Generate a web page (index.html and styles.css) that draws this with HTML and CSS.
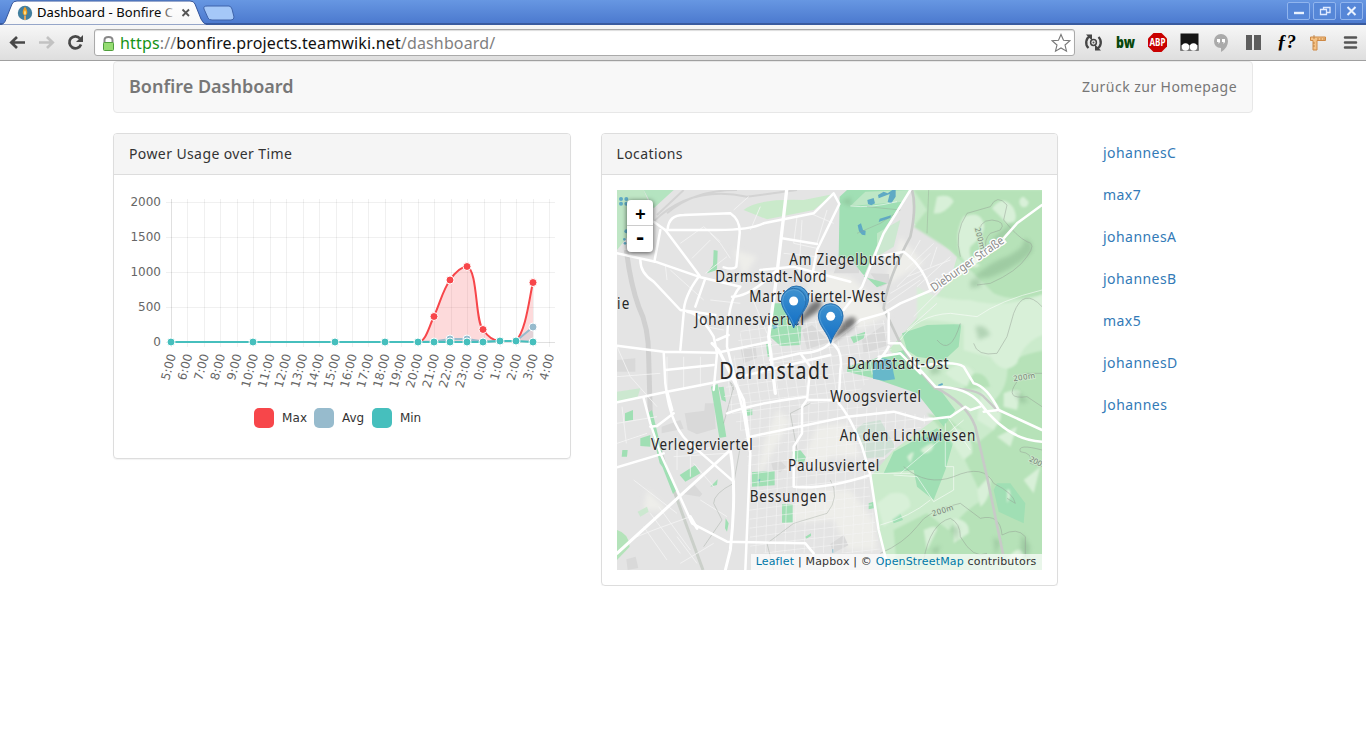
FILE: index.html
```html
<!DOCTYPE html>
<html lang="de">
<head>
<meta charset="utf-8">
<title>Dashboard - Bonfire</title>
<link rel="stylesheet" href="styles.css">
</head>
<body>
<header class="browser">
  <div class="tabstrip">
    <svg class="tabs" width="260" height="25" viewBox="0 0 260 25">
      <defs>
        <linearGradient id="tabg" x1="0" y1="0" x2="0" y2="1"><stop offset="0" stop-color="#fff"/><stop offset="1" stop-color="#f7f7f7"/></linearGradient>
        <linearGradient id="fade"><stop offset="0" stop-color="#000"/><stop offset=".91" stop-color="#111"/><stop offset="1" stop-color="#ccc"/></linearGradient>
      </defs>
      <path d="M0 25C4 24 5 22 6 19L12 4Q13 1 17 1H190Q194 1 195 4L201 19Q203 24 208 25Z" fill="url(#tabg)" stroke="#34559b"/>
      <path d="M207 6H229Q231 6 232 9L234 17Q234 20 231 20H212Q209 20 208 18L204 9Q203 6 207 6Z" fill="#a5c8f8" stroke="#3e63aa"/>
      <circle cx="25" cy="13" r="7.2" fill="#427f9f"/>
      <path d="M25 6.5Q21.800 11.500 23 14Q25 16.500 27 14Q28.200 11.500 25 6.500Z" fill="#ef9d20"/>
      <path d="M25 10Q23.500 12.500 24.300 14.500H25.700Q26.500 12.500 25 10Z" fill="#fff2a5"/>
      <path d="M24 15.500H26V20H24Z" fill="#d8a360"/>
      <text x="37" y="17" class="tab-title" textLength="136" fill="url(#fade)">Dashboard - Bonfire C</text>
      <path d="M182.500 9.500L189 16M189 9.500L182.500 16" stroke="#555" stroke-width="1.800"/>
    </svg>
    <svg class="winbtns" width="82" height="25" viewBox="1284 0 82 25">
      <g fill="#5687d8" stroke="#91b5ee">
        <rect x="1287.500" y="2.500" width="22" height="17" rx="1.500"/><rect x="1313.500" y="2.500" width="22" height="17" rx="1.500"/><rect x="1340.500" y="2.500" width="22" height="17" rx="1.500"/>
      </g>
      <path d="M1294 13H1304" stroke="#e9f2ff" stroke-width="2.400"/>
      <path d="M1320.500 9.500H1326.500V14.500H1320.500ZM1323.500 9.500V7.500H1330V12.500H1326.500" fill="none" stroke="#dfeaff" stroke-width="1.300"/>
      <path d="M1347.500 7L1355.500 15M1355.500 7L1347.500 15" stroke="#e9f2ff" stroke-width="2"/>
    </svg>
  </div>
  <div class="toolbar">
    <svg class="nav-icons" width="94" height="35" viewBox="0 25 94 35">
      <g fill="none" stroke-width="2.700">
        <path d="M25 42.500H11M17 37L11.300 42.500L17 48" stroke="#484848"/>
        <path d="M39 42.500H53M47 37L52.700 42.500L47 48" stroke="#c2c2c2"/>
        <path d="M80 38.500A6 6 0 1 0 81 44.500" stroke="#484848"/>
      </g>
      <path d="M83 35V42H76Z" fill="#484848"/>
    </svg>
    <div class="omnibox">
      <svg width="14" height="18" viewBox="100 33 14 18">
        <path d="M103.500 42V39Q103.500 36 107.500 36T111.500 39V42" fill="none" stroke="#888" stroke-width="2"/>
        <rect x="102.500" y="41.500" width="10" height="8" rx="1" fill="#95dc72" stroke="#4f9e3c"/>
      </svg>
      <span class="url"><b>https</b><i>://</i>bonfire.projects.teamwiki.net<i>/dashboard/</i></span>
      <svg class="star" width="20" height="20" viewBox="0 0 20 20"><path d="M10 1.500L12.500 7.300L18.700 7.800L14 12L15.500 18.200L10 15L4.500 18.200L6 12L1.300 7.800L7.500 7.300Z" fill="#fff" stroke="#777" stroke-width="1.100"/></svg>
    </div>
    <svg class="ext" width="290" height="35" viewBox="1076 25 290 35">
      <g fill="none" stroke="#454545" stroke-width="2.300"><path d="M1090.500 35.800A7.500 7.500 0 0 0 1088.500 48M1096.500 49.200A7.500 7.500 0 0 0 1098.500 37"/><circle cx="1093.500" cy="42.500" r="2.900" stroke-width="1.500"/></g>
      <path d="M1086 34.500H1092V40.500ZM1101 50.500H1095V44.500Z" fill="#454545"/><circle cx="1093.500" cy="42.500" r="1" fill="#555"/>
      <text x="1116" y="48" class="bw" textLength="19" lengthAdjust="spacingAndGlyphs">bw</text>
      <path d="M1153.500 33H1161.500L1167 38.500V46.500L1161.500 52H1153.500L1148 46.500V38.500Z" fill="#c90000"/>
      <text x="1149.500" y="46.300" class="abp" textLength="16" lengthAdjust="spacingAndGlyphs">ABP</text>
      <rect x="1180.500" y="33.500" width="18" height="17" fill="#151515"/><path d="M1180.500 45H1198.500V51H1180.500Z" fill="#777"/>
      <circle cx="1185.500" cy="47" r="3.700" fill="#fff"/><circle cx="1193.500" cy="47" r="3.700" fill="#fff"/>
      <path d="M1221 34A7 7 0 0 0 1214 41Q1214 47.500 1221 48V52Q1228 48 1228 41A7 7 0 0 0 1221 34Z" fill="#aaa"/>
      <path d="M1217 39H1220V42L1218.500 44V42H1217ZM1222 39H1225V42L1223.500 44V42H1222Z" fill="#fff"/>
      <path d="M1246 35H1252V50H1246ZM1254 35H1261V50H1254Z" fill="#5d5d5d"/>
      <text x="1277" y="48" class="ff" textLength="19" lengthAdjust="spacingAndGlyphs">ƒ?</text>
      <path d="M1310.500 37H1325.500V40.500H1317V50H1313V40.500H1310.500Z" fill="#f5c285" stroke="#cd8845"/>
      <path d="M1314 35V39M1318 38V40M1321 38V40M1324 38V40M1313 43H1315M1313 46H1315" stroke="#b87938" stroke-width=".8"/>
      <path d="M1345 37.500H1356M1345 42.500H1356M1345 47.500H1356" stroke="#555" stroke-width="2.500" stroke-linecap="round"/>
    </svg>
  </div>
</header>
<div class="container">
  <nav class="navbar"><a class="brand">Bonfire Dashboard</a><a class="home">Zurück zur Homepage</a></nav>
  <main class="row">
    <section class="panel chart-panel">
      <h3 class="panel-heading">Power Usage over Time</h3>
      <div class="panel-body"><svg id="chart" width="427" height="253" viewBox="129 190 427 253"></svg></div>
    </section>
    <section class="panel map-panel">
      <h3 class="panel-heading">Locations</h3>
      <div class="panel-body">
        <div class="map">
          <svg class="tiles" width="425" height="380" viewBox="0 0 1275 1140">
            <defs>
              <filter id="b6"><feGaussianBlur stdDeviation="8"/></filter>
              <filter id="b3" x="-50%" y="-50%" width="200%" height="200%"><feGaussianBlur stdDeviation="6"/></filter>
              <filter id="b1"><feGaussianBlur stdDeviation="2.500"/></filter>
              <linearGradient id="pin" x1="0" y1="0" x2="0" y2="1"><stop offset="0" stop-color="#3f92cf"/><stop offset="1" stop-color="#126fc6"/></linearGradient>
              <clipPath id="cityclip"><path d="M380 390H800L830 470L700 640L950 680L830 780L750 860L790 1090H400L390 760L320 620Z"/></clipPath>
              <g id="marker">
                <path d="M0 0C-8 -32 -37 -53 -37 -82A37 37 0 0 1 37 -82C37 -53 8 -32 0 0Z" fill="url(#pin)" stroke="#2a6fac" stroke-width="3"/>
                <path d="M0 -10C-8 -37 -33 -56 -33 -82A33 33 0 0 1 33 -82" fill="none" stroke="#68aadb" stroke-width="3" opacity=".6"/>
                <circle cy="-81" r="13.500" fill="#fff"/>
              </g>
              <path id="pinshade" d="M0 0Q16 -36 40 -66Q66 -88 76 -72Q78 -52 44 -32Q20 -18 0 0Z" fill="#000" opacity=".48" filter="url(#b3)"/>
            </defs>
            <rect width="1275" height="1140" fill="#e4e4e4"/>
            <!-- terrain -->
            <g filter="url(#b6)" fill="#eeeeea">
              <path d="M590 240L700 260L820 370L730 420L640 330L560 330ZM690 700L600 710L560 800L590 850L640 800L730 800L720 770ZM480 660L520 690L460 800L420 870L440 760ZM560 900L700 900L770 990L780 1080H690L650 990L500 1000ZM350 180L420 200L380 260ZM90 900L150 960L80 960ZM850 140L920 220L800 290Z"/>
            </g>
            <g fill="#d9d9d9">
              <path d="M203 670L262 662L264 640L292 640L296 716L240 733L212 720ZM134 710L190 690L200 716L134 730ZM555 420L585 405L640 455L570 478ZM370 474L415 462L420 504L380 520ZM198 912L232 884L256 912L248 920ZM28 1108L56 1100L64 1134L32 1140ZM640 1062L680 1035L694 1066L648 1090ZM770 820L828 794L832 822L788 842ZM760 250L816 252L818 278L790 292ZM35 10L70 45L30 45ZM676 183L726 172V250H650ZM735 450L800 405L815 465L740 490ZM463 820L490 812L508 830L490 847L468 840ZM0 510L55 505V545H0Z"/>
            </g>
            <g fill="none" stroke="#d0d0d0">
              <path d="M28 180Q40 280 65 350Q95 410 95 500L100 680" stroke-width="15"/>
              <path d="M100 680L152 850L210 1010L258 1140" stroke-width="9" stroke="#cbd0ca"/>
              <path d="M110 95Q220 -15 390 20L540 0M120 75L200 0M150 70Q230 0 360 0" stroke-width="6" stroke="#d3d3d3"/>
            </g>
            <path d="M110 0H170L110 55L80 0Z" fill="#b4e4c0"/><path d="M0 0H80L105 60L40 130L0 180Z" fill="#bfe6c5"/>
            <!-- woodland -->
            <path d="M885 0H1275V1140H812L783 1030L760 860L830 780L950 690L1000 680L970 600L880 530L815 480L850 440L1000 270L1020 200L930 120L890 100Z" fill="#cbebcc"/>
            <path d="M380 60Q420 25 560 30L650 12L590 60L450 88Z" fill="#caeacb"/>
            <g fill="#b6e2b8" filter="url(#b1)">
              <path d="M1010 0H1290V310Q1190 340 1130 310L1060 240L1000 180L890 110L930 60L890 0ZM1170 520Q1220 490 1290 480V1150H930L980 1040Q1050 950 1100 930L1030 780L930 670L1000 690L1080 760L1130 720L1110 650Q1180 600 1170 520ZM830 1020L930 970L1020 1040L940 1140H840ZM1050 560Q1100 530 1120 590L1040 600Z"/>
            </g>
            <g fill="#a0dfb4">
              <path d="M668 20L690 0H880L800 120L740 260L810 280L780 292L735 250L700 205H665Z"/>
              <path d="M855 430L930 405L1033 402L1025 470L980 512L900 500L870 480ZM690 530L760 510L860 480L920 560L970 600L1015 660L980 710L900 610L770 565L690 545ZM830 785L960 715L1008 760L985 840L950 930L900 890L890 840L800 850ZM1140 880L1180 880L1225 940L1220 1000L1145 965L1130 900Z"/>
              <path d="M463 340H500L525 400L553 410L550 465L490 468L460 440ZM405 846L473 843V886L405 890ZM495 943H527V998H495ZM188 855L235 825L250 850L205 875ZM525 785L550 780L567 802L560 820L530 812ZM282 590L302 582L328 740L307 744ZM305 592L320 590L327 635L314 630ZM92 670L105 660L150 850L128 820ZM70 745L100 735V770L70 768ZM120 790L130 780L178 900L168 912ZM16 780H32L30 800H14ZM24 670L48 660V690L24 694ZM290 180L302 182L300 240L270 250L288 225ZM700 440L745 425L740 445L710 460ZM820 975L850 970L858 990L830 1000ZM326 985L335 1000L330 1025L324 1015ZM280 890L302 868L300 885ZM447 462L465 462L464 500L452 500ZM387 660L406 658V675L388 678ZM565 1040L582 1030V1038L568 1046ZM755 940L770 935V955L755 958Z"/>
            </g>
            <g fill="#c5e8cb"><path d="M0 605L70 595L60 628L0 635ZM62 965L90 950L95 965L70 980ZM745 5L880 0L860 35L700 48ZM780 130L850 90L830 170L780 200Z" opacity=".8"/></g>
            <path d="M740 700L790 690L835 770L800 800L750 805L715 720Z" fill="#cfe0d5"/>
            <path d="M0 1020Q35 1030 38 1070L0 1110Z" fill="#b4e3ba"/>
            <g fill="#d8f0d8" filter="url(#b1)">
              <path d="M1040 80Q1090 60 1100 100Q1110 130 1060 170Q1050 210 1090 225Q1060 250 1030 195Q1010 130 1040 80ZM960 20Q1000 10 1010 35Q980 75 950 70ZM900 290Q950 330 1060 330Q1160 360 1290 310V430Q1220 450 1200 520Q1160 560 1120 500Q1070 490 1040 480V405Q980 390 900 390ZM985 550Q1030 500 1070 545L1050 590L1010 570ZM1095 600L1120 630Q1160 650 1150 690L1130 720L1080 690ZM1010 710Q1070 730 1065 790L1040 810L1000 750ZM1010 985Q1060 990 1055 1030L1010 1060ZM920 1020Q960 1000 960 1020L930 1080ZM1080 900Q1120 850 1120 870Q1120 930 1090 950ZM1175 1100Q1210 1060 1220 1095L1190 1130ZM1160 610Q1210 590 1210 610L1200 660L1160 650ZM1125 55Q1160 10 1190 55Q1210 100 1170 100ZM1220 870L1270 830L1250 910ZM1200 710L1180 770L1140 740Z"/>
              <path d="M1220 20A14 16 0 1 0 1235 35ZM910 780Q950 750 950 765Q945 790 920 790ZM870 800Q890 780 890 790L880 820ZM780 940L820 910Q880 900 880 950L800 1010ZM1170 900Q1180 890 1180 920L1170 940Z"/>
            </g>
            <g filter="url(#b3)" fill="#80ad86" opacity=".42">
              <path d="M1070 260Q1130 210 1170 200Q1230 170 1220 145Q1250 150 1245 185Q1190 240 1110 265ZM1060 270L1090 265V290L1060 295ZM1120 150L1185 100Q1200 110 1150 150ZM940 530L965 520L970 550L940 555ZM1075 410Q1105 400 1120 435L1085 450ZM1190 600L1210 610L1235 635L1210 640ZM1000 1010L1025 1010L1020 1055ZM940 1080L970 1065L960 1095ZM670 35L700 20L705 50ZM1130 1040L1150 1055L1135 1100ZM1215 1030L1240 1070L1230 1110L1210 1080Z"/>
            </g>
            <!-- water -->
            <g fill="#5faac4">
              <path d="M751 30L770 24L774 40L763 46L753 42ZM783 15L800 5L812 10L826 0H836V20L823 40L812 36L818 12L785 25ZM788 86L822 76L820 84L785 96ZM722 106L732 100L738 120L746 122L745 136L735 134L726 124ZM962 585L976 579L978 584L966 590ZM466 407L480 400L482 412L470 418Z"/>
              <path d="M766 518L790 505L822 508L830 550L834 568L800 572L768 566Z" fill="#67b8ca"/>
              <path d="M924 745L970 730L973 750L935 754ZM421 870L430 866L428 880ZM645 1078H650V1088H645Z" opacity=".65"/>
              <circle cx="12" cy="27" r="6"/><circle cx="28" cy="27" r="6"/><circle cx="12" cy="41" r="6"/><circle cx="28" cy="41" r="6"/><circle cx="28" cy="124" r="6"/><circle cx="22" cy="148" r="4"/><circle cx="24" cy="160" r="4"/>
            </g>
            <!-- minor streets -->
            <g fill="none" stroke="#f4f4f4" stroke-width="2.500">
              <g clip-path="url(#cityclip)"><path id="grid" opacity=".7"/></g>
              <path d="M0 470L40 560L120 650M0 560L130 550M0 700L120 680M15 650L28 760M280 130L310 160L340 205M190 160L260 110L310 155M225 205L280 150M265 250L330 200M430 50L400 120M540 80L530 160L600 175M580 70L650 100M555 90L545 260M630 60L600 160M500 190L600 200M145 225L150 270M160 240L260 330M280 330L370 340M400 310L450 430M265 410L320 420M0 760L90 730M50 870L180 970M80 1010L150 1110M100 970L190 1090M125 950L220 1080M60 1040L110 1020L220 980M180 1040L240 1120M190 1120L290 1060M230 820L290 890M230 790L310 760M250 930L330 980M350 60L395 20M875 210L910 150M865 240L950 160M870 260L1000 210M840 290L940 190M810 340L910 270M820 310L920 250M940 230L960 170M900 290L1000 200M890 380L970 300M870 420L960 340M180 740V840M220 770V860M170 800L330 790M150 500V600M200 500V600M250 500V590"/>
            </g>
            <g fill="none" stroke="#fff" stroke-opacity=".55" stroke-width="3"><path d="M850 850L1040 690M830 855L900 860L950 935M760 850H880M985 700V830H1010V900L950 935M790 1005Q880 980 940 930M850 450Q900 375 1000 370L1080 380Q1150 330 1275 300M990 680L1060 780M700 48Q760 55 840 35"/></g>
            <!-- contour lines -->
            <g fill="none" stroke="#929b92" stroke-width="2" opacity=".7">
              <path d="M1088 145Q1080 90 1125 90Q1170 95 1150 120L1120 130Q1100 150 1108 175M1030 200Q1010 130 1050 70L1120 50Q1140 10 1170 45L1160 90Q1200 140 1230 155Q1260 160 1230 200Q1200 245 1120 280L1080 285M1200 575Q1160 630 1230 620L1275 650M1220 550H1275M1275 780Q1200 760 1210 785Q1250 790 1240 820L1275 830M790 1090Q860 1060 900 1010Q930 960 1030 940L1090 985Q1150 970 1155 1035M1155 1035Q1200 1010 1225 1040V1100M920 1110Q940 1000 1000 985Q1030 1000 1030 1040Q1070 1110 1110 1090M860 830Q930 890 1010 860Q1100 820 1130 880Q1190 910 1195 940L1170 925M1275 350Q1220 290 1190 370L1170 440L1140 490Q1080 500 1070 460M960 450Q1000 500 1030 400"/>
              <path d="M370 770L350 880Q290 910 290 940L315 990L260 1070M580 640L520 670L540 780M640 870Q670 920 630 970L530 1000L450 1060L470 1140M350 600Q330 560 350 590L320 700M935 0L930 130M750 50L850 60L790 100L720 130" opacity=".75"/>
            </g>
            <!-- railway -->
            <g fill="none" stroke="#c8cac8" stroke-width="8">
              <path d="M885 0Q900 50 880 140Q810 270 800 355L845 450L880 510L950 590Q1050 640 1075 710L1110 860L1158 1092"/><path d="M950 595Q1080 590 1105 625L1145 665" stroke-width="7"/>
            </g>
            <!-- main roads -->
            <g fill="none" stroke="#fff" stroke-width="7.500" stroke-linejoin="round" stroke-linecap="round">
              <path d="M110 95L145 120H300Q400 120 440 100L590 70L650 10L667 42L600 180L585 260"/>
              <path d="M130 120L112 215M152 118Q155 75 200 75L340 70Q370 90 368 130L358 230Q350 240 320 232M145 120L250 260M0 190L115 215L245 260L370 290M70 210Q70 250 110 275L190 360L295 375M245 260Q200 320 200 370L190 480M265 265L235 350M370 290Q330 330 330 470L380 670L400 790L385 1140M210 365Q250 370 290 440L300 490L290 600M495 145L600 162M430 240L530 230L700 275M300 450L335 435"/>
              <path d="M509 0L480 250L455 440L475 610" stroke-width="10"/>
              <path d="M480 240Q400 320 345 320M0 467L140 485L300 488L460 455M145 540L290 525M140 485L145 580Q160 720 230 770L350 875M0 637L150 605L330 570L640 495M460 510L550 490Q610 490 645 455L730 390L800 370L850 340L945 300M640 455Q680 480 670 540L665 640Q700 680 735 770L760 855L785 1020L815 1140M550 490L580 530L570 630L555 650V730L530 770V890Q620 900 760 855M570 630L665 630M330 670Q410 640 570 620M400 740L690 680L830 665L920 690L1000 680L1045 650L1060 660L1090 650M80 625L100 700L130 790L225 1000L330 1055L565 1060L590 1090M170 670L120 708L100 710M0 832L140 790M880 0L800 130L735 290L680 360M780 200L860 185Q920 230 940 300"/>
              <path d="M815 370V460H850L910 540L955 590Q1050 590 1090 640Q1170 750 1275 755M785 500L850 490L910 550M815 470Q800 500 780 510M900 530Q1010 510 1040 530L1070 580Q1110 590 1145 660L1100 665M1145 660L1275 720M1275 45L1200 100L1160 145"/>
              <path d="M0 1090L340 780M285 460L305 480L380 630L400 780M220 980L240 1015M340 780Q360 900 340 1080L325 1140M150 605L165 660" stroke-width="9"/>
            </g>
            <path d="M945 300L1165 150" stroke="#eff6ed" stroke-width="18"/>
            <g class="street-name"><text transform="translate(951 306) rotate(-35)" textLength="260" lengthAdjust="spacingAndGlyphs">Dieburger Straße</text></g>
            <g class="contour-name"><text transform="translate(1073 115) rotate(75)" textLength="66">200m</text><text transform="translate(1190 574) rotate(-9)" textLength="66">200m</text><text transform="translate(948 979) rotate(-18)" textLength="66">200m</text><text transform="translate(1235 812) rotate(27)">200</text></g>
            <g class="places" id="places"></g>
            <use href="#pinshade" x="538" y="410"/><use href="#pinshade" x="641" y="460"/>
            <use href="#marker" x="538" y="407"/><use href="#marker" x="530" y="414"/><use href="#marker" x="641" y="460"/>
          </svg>
          <div class="zoom"><a>+</a><a class="minus">-</a></div>
          <div class="attribution"><a>Leaflet</a> | Mapbox | © <a>OpenStreetMap</a> contributors</div>
        </div>
      </div>
    </section>
    <ul class="users"><li>johannesC</li><li>max7</li><li>johannesA</li><li>johannesB</li><li>max5</li><li>johannesD</li><li>Johannes</li></ul>
  </main>
</div>
<script src="dashboard.js"></script>
</body>
</html>
```
FILE: styles.css
```css
* { box-sizing: border-box; }
body { margin: 0; background: #fff; color: #333; font: 14px/20px "Noto Sans", "Open Sans", sans-serif; overflow: hidden; }
svg { display: block; flex: none; }
.browser { height: 61px; }
.tabstrip { height: 25px; display: flex; justify-content: space-between; background: linear-gradient(#6797e2, #4c7acf 92%, #395b9f 94%); }
.tab-title { font-size: 13px; }
.toolbar { height: 36px; display: flex; align-items: flex-start; background: linear-gradient(#f7f7f7, #dedede); border-bottom: 1px solid #a0a0a0; }
.omnibox { width: 981px; margin-right: 1px; height: 27px; margin-top: 4px; padding: 0 3px 0 6px; display: flex; align-items: center; background: #fff; border: 1px solid #aaa; border-radius: 3px; box-shadow: inset 0 1px 1px #ddd; }
.url { flex: 1; margin-left: 5px; font-size: 16px; line-height: 24px; letter-spacing: .15px; color: #111; white-space: nowrap; }
.url b { font-weight: 400; color: #169316; }
.url i { font-style: normal; color: #808080; }
.bw { font: 900 16px "Noto Sans", sans-serif; fill: #08470b; }
.abp { font: 700 10px "Noto Sans", sans-serif; fill: #fff; }
.ff { font: italic 700 18px "Liberation Serif", serif; fill: #000; }
.container { width: 1140px; margin: 0 auto; }
.navbar { height: 52px; padding: 0 15px; margin-bottom: 20px; display: flex; align-items: center; justify-content: space-between; background: #f8f8f8; border: 1px solid #e7e7e7; border-radius: 4px; color: #777; }
.brand { font-size: 18px; font-weight: 600; padding-bottom: 2px; }
.home { letter-spacing: .45px; }
.row { display: flex; align-items: flex-start; gap: 30px; }
.panel { width: 457.5px; border: 1px solid #ddd; border-radius: 4px; box-shadow: 0 1px 1px rgba(0, 0, 0, .05); }
.panel-heading { margin: 0; height: 41px; padding: 10px 15px; font-size: 14px; font-weight: 400; line-height: 20px; letter-spacing: .4px; background: #f5f5f5; border-bottom: 1px solid #ddd; border-radius: 3px 3px 0 0; }
.panel-body { padding: 15px; }
.users { list-style: none; margin: 0; padding: 0 0 0 15px; color: #337ab7; display: grid; gap: 2px; letter-spacing: .45px; }
.users li { padding: 10px 0; height: 40px; }
.axis { font: 12px "DejaVu Sans", sans-serif; fill: #666; }
.legend { font: 12px "DejaVu Sans", sans-serif; fill: #333; }
.map { position: relative; width: 425px; height: 380px; overflow: hidden; }
.places text { font: 47px "Noto Sans", "Open Sans", sans-serif; fill: #262626; paint-order: stroke; stroke: #eee; stroke-opacity: .6; stroke-width: 5px; }
.places .city { font-size: 68px; }
.street-name { font: 35px "Noto Sans", sans-serif; fill: #8b8b8b; paint-order: stroke; stroke: #fff; stroke-width: 8px; }
.contour-name { font: 23px "Noto Sans", sans-serif; fill: #757d75; paint-order: stroke; stroke: #cbe8cb; stroke-width: 6px; }
.zoom { position: absolute; left: 10px; top: 10px; width: 26px; height: 52px; border-radius: 4px; background: #fff; box-shadow: 0 1px 5px rgba(0, 0, 0, .65); color: #000; font: 700 18px/26px "Liberation Mono", monospace; text-align: center; }
.zoom a { display: block; height: 26px; padding-top: 2px; padding-left: 2px; border-bottom: 1px solid #ccc; }
.zoom .minus { border: 0; padding: 0 0 0 1px; font-size: 22px; }
.attribution { position: absolute; right: 0; bottom: 0; padding: 0 5px; height: 16px; background: rgba(255, 255, 255, .7); font: 11px/16px "DejaVu Sans", sans-serif; letter-spacing: .17px; white-space: nowrap; }
.attribution a { color: #0078a8; }
```
FILE: dashboard.js
```js
const hours = [5,6,7,8,9,10,11,12,13,14,15,16,17,18,19,20,21,22,23,0,1,2,3,4];
const px = i => 171 + i * 16.45;
let out = '';
hours.forEach((h, i) => {
  const x = Math.round(px(i)) + .5;
  out += `<path d="M${x} 199V347" stroke="#000" stroke-opacity="${i ? .06 : .12}"/>`;
  out += `<text class="axis" text-anchor="end" transform="translate(${px(i) + 5} 355) rotate(-75)">${h}:00</text>`;
});
[0, 500, 1000, 1500, 2000].forEach(v => {
  const y = 342.5 - v * .07;
  out += `<path d="M166 ${y}H555" stroke="#000" stroke-opacity="${v ? .06 : .12}"/><text class="axis" text-anchor="end" x="161" y="${y + 3.5}">${v}</text>`;
});
const dots = (pts, c) => pts.map(p => `<circle cx="${p[0]}" cy="${p[1]}" r="4" fill="${c}" stroke="#fff"/>`).join('');
const red = 'M171 342H418C426 342 429 326 434 316.500C441 300 443 290 450 280C456 271 461 267 467 266.500C478 270 475 322 483 329.500C488 337 493 341 500 341H516C526 330 529 300 533 282';
const avg = 'M171 342L418 342L434 341.500L450 339L467 339L483 341.500L500 341L516 341L533 327';
out += `<path d="${red}V342H171Z" fill="#f7464a" fill-opacity=".2"/><path d="${red}" fill="none" stroke="#f7464a" stroke-width="2"/>`;
out += dots([[434,316.5],[450,280],[467,266.5],[483,329.5],[533,282.5]], '#f7464a');
out += `<path d="${avg}V342H171Z" fill="#97bbcd" fill-opacity=".25"/><path d="${avg}" fill="none" stroke="#97bbcd" stroke-width="2"/>`;
out += dots([[450,339],[467,339],[533,327]], '#97bbcd');
out += '<path d="M171 342H483L500 341H516L533 342" fill="none" stroke="#46bfbd" stroke-width="2"/>';
out += dots([171,253,335,385,418,434,450,467,483,500,516,533].map(x => [x, x === 500 || x === 516 ? 341 : 342]), '#46bfbd');
[[254,'#f7464a','Max',282,25],[314,'#97bbcd','Avg',342,22],[372,'#46bfbd','Min',400,21]].forEach(l => {
  out += `<rect x="${l[0]}" y="408" width="20" height="20" rx="5" fill="${l[1]}"/><text class="legend" x="${l[3]}" y="422" textLength="${l[4]}">${l[2]}</text>`;
});
document.getElementById('chart').innerHTML = out;

let streets = '';
for (let i = 0; i < 30; i++) {
  streets += `M${130 + i * 29} 380L${170 + i * 29} 640L${155 + i * 29} 1100`;
  streets += `M120 ${430 + i * 27}L500 ${380 + i * 27}L950 ${330 + i * 27}`;
}
document.getElementById('grid').setAttribute('d', streets);

// Labels are condensed horizontally, then spaced out to their full width.
const squeeze = .86;
const places = [
  ['Am Ziegelbusch',517,225,334],['Darmstadt-Nord',295,276,334],['Martinsviertel-West',397,335,408],
  ['Johannesviertel',233,404,328],['Darmstadt',307,567,327,'city'],['Darmstadt-Ost',690,537,305],
  ['Woogsviertel',640,635,272],['An den Lichtwiesen',668,753,407],['Paulusviertel',513,844,274],
  ['Verlegerviertel',102,779,305],['Bessungen',398,937,230],['ie',0,356,37]
];
document.getElementById('places').innerHTML = places.map(p => `<text class="${p[4] || ''}" transform="translate(${p[1]} ${p[2]}) scale(${squeeze} 1)" textLength="${p[3] / squeeze}">${p[0]}</text>`).join('');
```
